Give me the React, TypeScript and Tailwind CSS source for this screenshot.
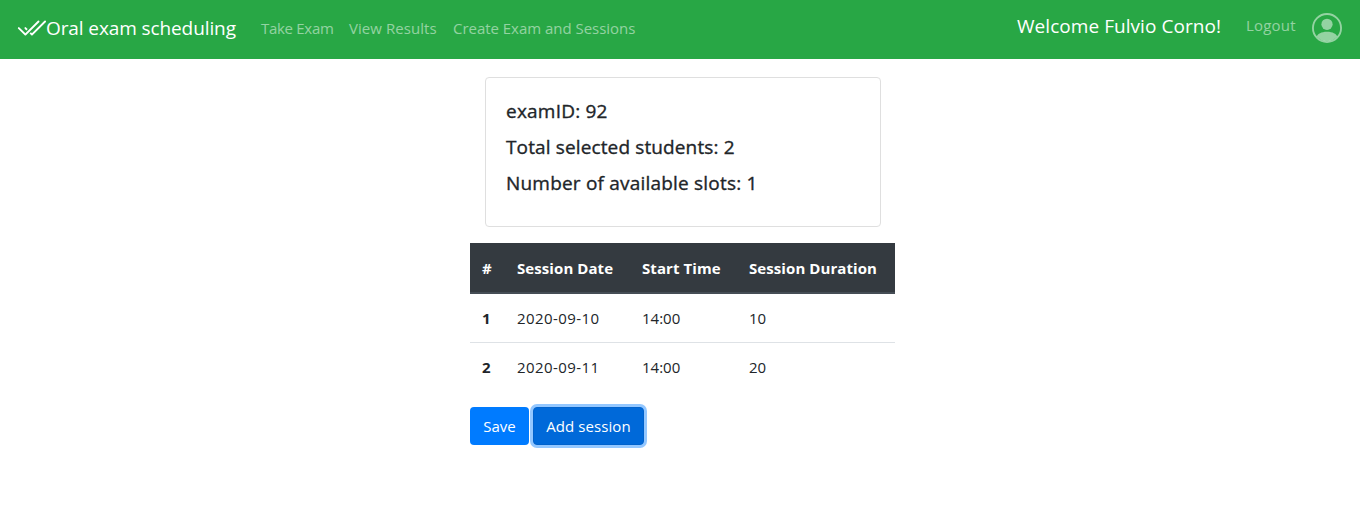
const sessions = [
  { id: 1, date: "2020-09-10", time: "14:00", duration: 10 },
  { id: 2, date: "2020-09-11", time: "14:00", duration: 20 },
];

function CheckAll() {
  return (
    <svg width="30" height="30" viewBox="0 0 16 16" fill="currentColor" className="shrink-0">
      <path d="M12.354 3.646a.5.5 0 0 1 0 .708l-7 7a.5.5 0 0 1-.708 0l-3.5-3.5a.5.5 0 1 1 .708-.708L5 10.293l6.646-6.647a.5.5 0 0 1 .708 0z" />
      <path d="M6.25 8.043l-.896-.897a.5.5 0 1 0-.708.708l.897.896.707-.707zm1 2.414l.896.897a.5.5 0 0 0 .708 0l7-7a.5.5 0 0 0-.708-.708L8.5 10.293l-.543-.543-.707.707z" />
    </svg>
  );
}

function PersonCircle() {
  return (
    <svg width="30" height="30" viewBox="0 0 16 16" fill="currentColor" className="shrink-0">
      <path d="M13.468 12.37C12.758 11.226 11.195 10 8 10s-4.757 1.225-5.468 2.37A6.987 6.987 0 0 0 8 15a6.987 6.987 0 0 0 5.468-2.63z" />
      <path d="M8 9a3 3 0 1 0 0-6 3 3 0 0 0 0 6z" />
      <path fillRule="evenodd" d="M8 1a7 7 0 1 0 0 14A7 7 0 0 0 8 1zM0 8a8 8 0 1 1 16 0A8 8 0 0 1 0 8z" />
    </svg>
  );
}

export default function App() {
  return (
    <div className="min-h-[521px] bg-white font-['Open_Sans',sans-serif] text-[15px] leading-6 text-[#212529]">
      <nav className="flex h-[59px] items-start bg-[#28a745] whitespace-nowrap text-white/50">
        <a className="flex w-[261px] items-start pt-[14px] pl-4 text-white">
          <CheckAll />
          <span className="text-[19px] leading-7 tracking-[-0.1px]">Oral exam scheduling</span>
        </a>
        <div className="flex pt-4">
          <a className="w-[88px] tracking-[-0.3px]">Take Exam</a>
          <a className="w-[104px] tracking-[0.05px]">View Results</a>
          <a className="tracking-[-0.03px]">Create Exam and Sessions</a>
        </div>
        <div className="ml-auto flex w-[343px] items-start">
          <span className="w-[229px] pt-3 text-[19px] leading-7 tracking-[0.05px] text-white">Welcome Fulvio Corno!</span>
          <a className="w-[66px] pt-[13px] tracking-[0.2px]">Logout</a>
          <span className="pt-[13px]"><PersonCircle /></span>
        </div>
      </nav>

      <main className="ml-[470px] w-[425px] pt-[18px]">
        <section className="mr-[14px] ml-[15px] h-[150px] rounded border border-[#dfdfdf] px-5 pt-[21px] text-[19px] leading-6 font-medium [-webkit-text-stroke:0.35px_#212529]">
          <h5 className="mb-3 tracking-[0.22px]">examID: 92</h5>
          <h5 className="mb-3 tracking-[0.13px]">Total selected students: 2</h5>
          <h5 className="tracking-[0.2px]">Number of available slots: 1</h5>
        </section>

        <table className="mt-4 w-full table-fixed border-separate border-spacing-0 text-left whitespace-nowrap">
          <colgroup>
            <col className="w-[35px]" />
            <col className="w-[125px]" />
            <col className="w-[107px]" />
            <col className="w-[158px]" />
          </colgroup>
          <thead>
            <tr className="h-[51px] bg-[#343a40] text-white">
              {["#", "Session Date", "Start Time", "Session Duration"].map((label) => (
                <th key={label} className="border-b-2 border-[#454d55] px-3 py-0 font-bold tracking-[0.08px]">{label}</th>
              ))}
            </tr>
          </thead>
          <tbody>
            {sessions.map((s) => (
              <tr key={s.id} className="group h-12 last:h-[49px]">
                <th className="px-3 py-0 font-bold group-last:border-t group-last:border-[#dee2e6]">{s.id}</th>
                <td className="px-3 py-0 tracking-[0.42px] group-last:border-t group-last:border-[#dee2e6]">{s.date}</td>
                <td className="px-3 py-0 group-last:border-t group-last:border-[#dee2e6]">{s.time}</td>
                <td className="px-3 py-0 group-last:border-t group-last:border-[#dee2e6]">{s.duration}</td>
              </tr>
            ))}
          </tbody>
        </table>

        <div className="mt-4 flex gap-1 whitespace-nowrap text-white">
          <button className="h-[38px] w-[59px] rounded bg-[#007bff]">Save</button>
          <button className="h-[38px] w-[111px] rounded border border-[#0062cc] bg-[#0069d9] tracking-[0.08px] ring-3 ring-[#93c7ff]">Add session</button>
        </div>
      </main>
    </div>
  );
}
